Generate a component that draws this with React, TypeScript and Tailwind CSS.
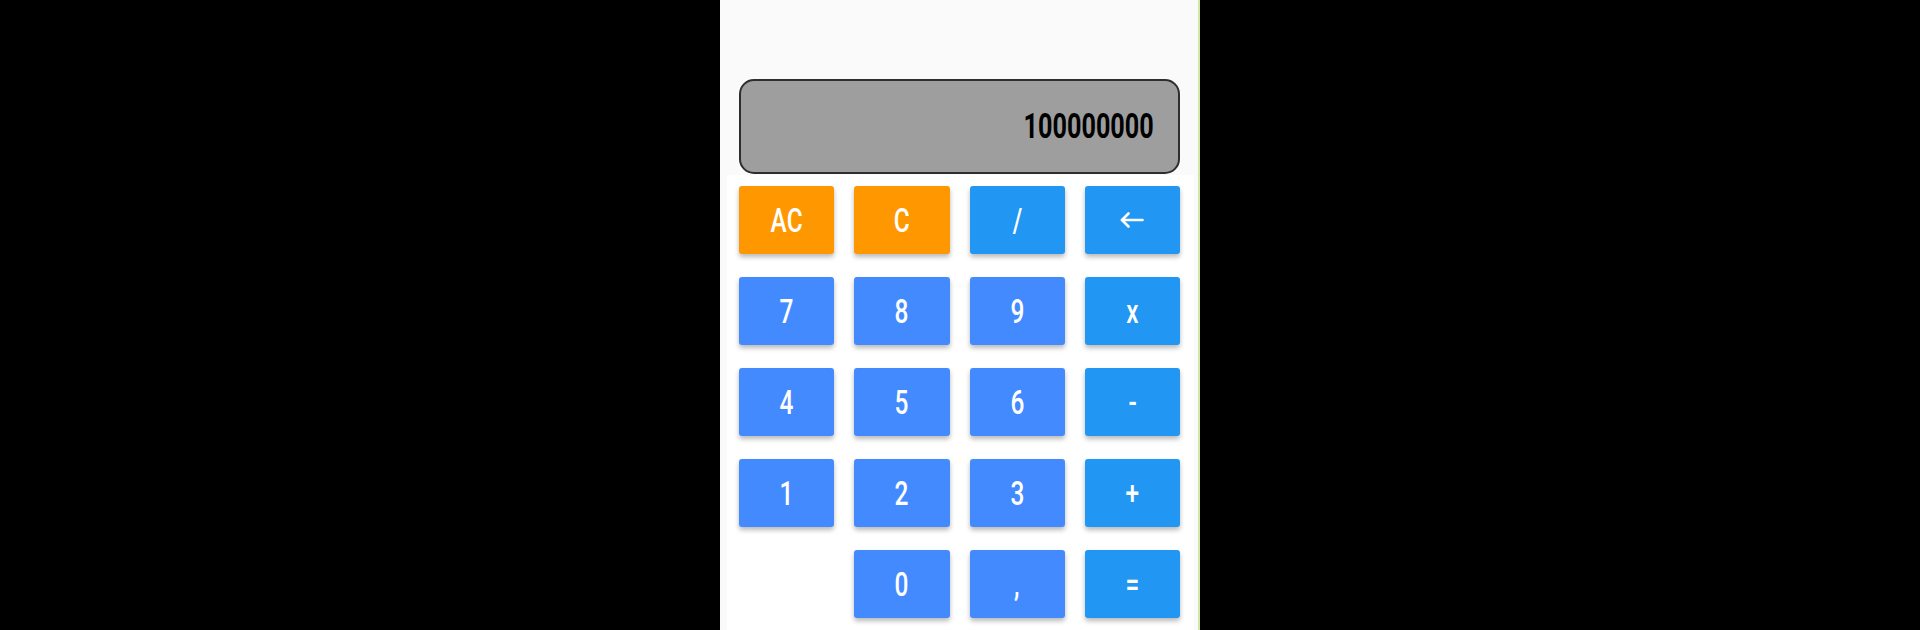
import React from 'react';

type Key = { label: string; kind: 'clear' | 'op' | 'digit' | 'empty' };

const KEYS: Key[] = [
  { label: 'AC', kind: 'clear' },
  { label: 'C', kind: 'clear' },
  { label: '/', kind: 'op' },
  { label: 'back', kind: 'op' },
  { label: '7', kind: 'digit' },
  { label: '8', kind: 'digit' },
  { label: '9', kind: 'digit' },
  { label: 'x', kind: 'op' },
  { label: '4', kind: 'digit' },
  { label: '5', kind: 'digit' },
  { label: '6', kind: 'digit' },
  { label: '-', kind: 'op' },
  { label: '1', kind: 'digit' },
  { label: '2', kind: 'digit' },
  { label: '3', kind: 'digit' },
  { label: '+', kind: 'op' },
  { label: '', kind: 'empty' },
  { label: '0', kind: 'digit' },
  { label: ',', kind: 'digit' },
  { label: '=', kind: 'op' },
];

const BG: Record<Key['kind'], string> = {
  clear: 'bg-[#ff9800]',
  op: 'bg-[#2196f3]',
  digit: 'bg-[#448aff]',
  empty: '',
};

const BackArrow = () => (
  <svg width="24" height="16" viewBox="0 0 24 16" fill="none" stroke="white" strokeWidth="2.6" strokeLinecap="round" strokeLinejoin="round">
    <path d="M22.5 8H2" />
    <path d="M8.5 1.5L2 8l6.5 6.5" />
  </svg>
);

const CalcKey: React.FC<{ k: Key }> = ({ k }) => {
  if (k.kind === 'empty') return <div className="h-[68px]" />;
  return (
    <button
      className={`${BG[k.kind]} h-[68px] rounded-[3px] shadow-[0_3px_5px_rgba(0,0,0,0.28)] flex items-center justify-center text-white`}
    >
      {k.label === 'back' ? (
        <BackArrow />
      ) : (
        <span className="inline-block scale-x-[0.74] text-[33px] leading-none font-medium">{k.label}</span>
      )}
    </button>
  );
};

export default function App() {
  return (
    <div className="w-full h-[630px] bg-black flex justify-center overflow-hidden" style={{ fontFamily: 'Roboto, "Noto Sans", sans-serif' }}>
      <div className="w-[480px] h-full bg-[#fafafa] border-r-2 border-[#d4e6a4] flex flex-col">
        <div className="pt-[79px] pl-[19px]">
          <div className="w-[441px] h-[95px] bg-[#9e9e9e] border-2 border-[#2e2e2e] rounded-[15px] flex items-center justify-end pr-[24px]">
            <span className="inline-block origin-right scale-x-[0.72] text-[35px] leading-none font-bold text-black">100000000</span>
          </div>
        </div>
        <div className="ml-[7px] mr-[4px] mt-px flex-1 bg-white pl-[12px] pt-[11px]">
          <div className="w-[441px] grid grid-cols-4 gap-x-[20px] gap-y-[23px]">
            {KEYS.map((k, i) => (
              <CalcKey key={i} k={k} />
            ))}
          </div>
        </div>
      </div>
    </div>
  );
}
